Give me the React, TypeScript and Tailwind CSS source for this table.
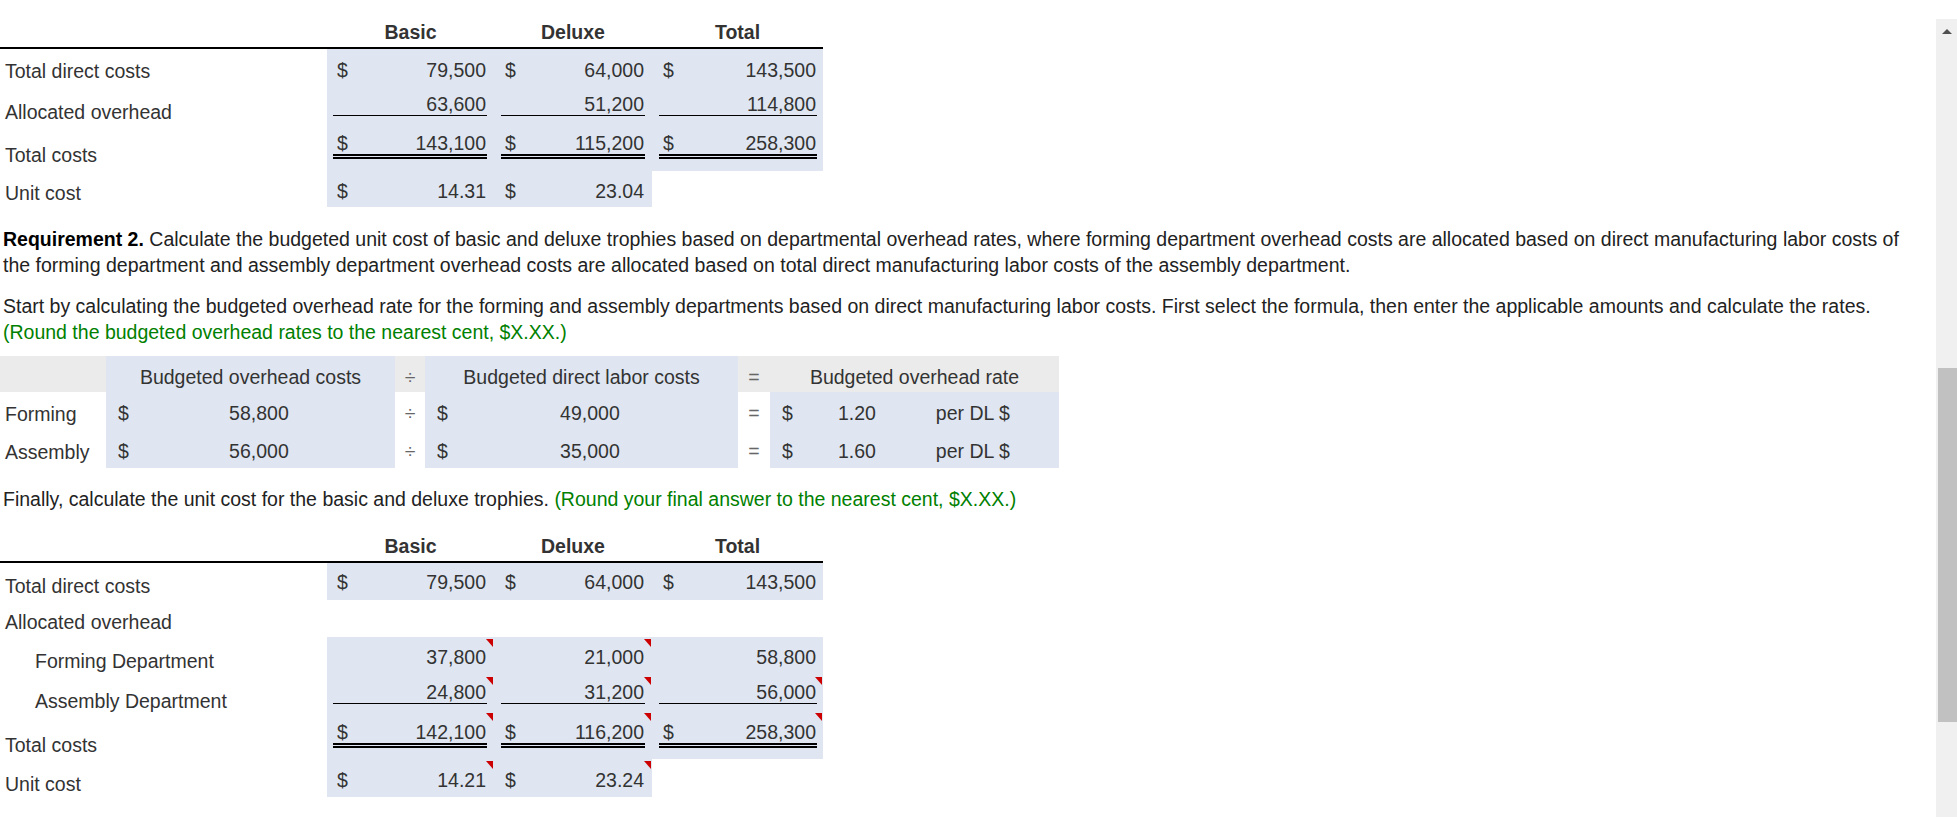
import React from 'react';

type Cell = { dollar?: boolean; value: string; flag?: boolean } | null;

interface CostRow {
  label: string;
  indent?: boolean;
  rowClass: string;
  labelPad: string;
  valPad: string;
  line?: 'single' | 'double';
  cells: Cell[];
}

// column geometry of the Basic / Deluxe / Total tables
const COLS = [
  { w: 'w-[167px]', pad: 'pl-[6px] pr-[7px]', title: 'Basic' },
  { w: 'w-[158px]', pad: 'pl-[7px] pr-[7px]', title: 'Deluxe' },
  { w: 'w-[171px]', pad: 'pl-[7px] pr-[6px]', title: 'Total' },
];

const topRows: CostRow[] = [
  {
    label: 'Total direct costs',
    rowClass: 'h-[38px]',
    labelPad: 'pt-[11px]',
    valPad: 'pt-[10px]',
    cells: [
      { dollar: true, value: '79,500' },
      { dollar: true, value: '64,000' },
      { dollar: true, value: '143,500' },
    ],
  },
  {
    label: 'Allocated overhead',
    rowClass: 'h-[35px]',
    labelPad: 'pt-[14px]',
    valPad: 'pt-[6px]',
    line: 'single',
    cells: [{ value: '63,600' }, { value: '51,200' }, { value: '114,800' }],
  },
  {
    label: 'Total costs',
    rowClass: 'h-[49px]',
    labelPad: 'pt-[22px]',
    valPad: 'pt-[11px]',
    line: 'double',
    cells: [
      { dollar: true, value: '143,100' },
      { dollar: true, value: '115,200' },
      { dollar: true, value: '258,300' },
    ],
  },
  {
    label: 'Unit cost',
    rowClass: 'h-[36px]',
    labelPad: 'pt-[11px]',
    valPad: 'pt-[9px]',
    cells: [{ dollar: true, value: '14.31' }, { dollar: true, value: '23.04' }, null],
  },
];

const bottomRows: CostRow[] = [
  {
    label: 'Total direct costs',
    rowClass: 'h-[37px]',
    labelPad: 'pt-[12px]',
    valPad: 'pt-[8px]',
    cells: [
      { dollar: true, value: '79,500' },
      { dollar: true, value: '64,000' },
      { dollar: true, value: '143,500' },
    ],
  },
  {
    label: 'Allocated overhead',
    rowClass: 'h-[37px]',
    labelPad: 'pt-[11px]',
    valPad: 'pt-[8px]',
    cells: [null, null, null],
  },
  {
    label: 'Forming Department',
    indent: true,
    rowClass: 'h-[38px]',
    labelPad: 'pt-[13px]',
    valPad: 'pt-[9px]',
    cells: [
      { value: '37,800', flag: true },
      { value: '21,000', flag: true },
      { value: '58,800' },
    ],
  },
  {
    label: 'Assembly Department',
    indent: true,
    rowClass: 'h-[36px]',
    labelPad: 'pt-[15px]',
    valPad: 'pt-[6px]',
    line: 'single',
    cells: [
      { value: '24,800', flag: true },
      { value: '31,200', flag: true },
      { value: '56,000', flag: true },
    ],
  },
  {
    label: 'Total costs',
    rowClass: 'h-[48px]',
    labelPad: 'pt-[23px]',
    valPad: 'pt-[11px]',
    line: 'double',
    cells: [
      { dollar: true, value: '142,100', flag: true },
      { dollar: true, value: '116,200', flag: true },
      { dollar: true, value: '258,300', flag: true },
    ],
  },
  {
    label: 'Unit cost',
    rowClass: 'h-[38px]',
    labelPad: 'pt-[14px]',
    valPad: 'pt-[10px]',
    cells: [
      { dollar: true, value: '14.21', flag: true },
      { dollar: true, value: '23.24', flag: true },
      null,
    ],
  },
];

function CostTable({ rows }: { rows: CostRow[] }) {
  return (
    <div className="w-[823px] text-[#333]">
      {/* Header */}
      <div className="flex h-[35px] items-center border-b-2 border-black pt-[2px]">
        <div className="w-[327px]" />
        {COLS.map((c) => (
          <div key={c.title} className={`${c.w} text-center font-bold`}>
            {c.title}
          </div>
        ))}
      </div>

      {rows.map((row) => (
        <div key={row.label} className={`flex ${row.rowClass}`}>
          <div className={`w-[327px] ${row.labelPad} ${row.indent ? 'pl-[35px]' : 'pl-[5px]'}`}>
            {row.label}
          </div>
          {row.cells.map((cell, i) => {
            const col = COLS[i];
            if (!cell) return <div key={i} className={col.w} />;
            return (
              <div key={i} className={`relative ${col.w} ${col.pad} ${row.valPad} bg-[#dfe6f1]`}>
                {cell.flag && (
                  <span className="absolute right-[1px] top-[2px] h-0 w-0 border-l-[7px] border-t-[8px] border-l-transparent border-t-[#cc0000]" />
                )}
                <div
                  className={`flex justify-between pl-[4px] pr-[1px] ${
                    row.line === 'single'
                      ? 'border-b border-black leading-[22px]'
                      : row.line === 'double'
                      ? 'border-b-[5px] border-double border-black leading-[21px]'
                      : 'leading-[22px]'
                  }`}
                >
                  <span>{cell.dollar ? '$' : ''}</span>
                  <span>{cell.value}</span>
                </div>
              </div>
            );
          })}
        </div>
      ))}
    </div>
  );
}

const rateRows = [
  { label: 'Forming', overhead: '58,800', labor: '49,000', rate: '1.20' },
  { label: 'Assembly', overhead: '56,000', labor: '35,000', rate: '1.60' },
];

function RateTable() {
  return (
    <div className="mt-[11px] w-[1059px] text-[#333]">
      <div className="flex h-[36px]">
        <div className="w-[106px] bg-[#ebebeb]" />
        <div className="flex w-[289px] items-center justify-center bg-[#dfe6f1] pt-[5px]">Budgeted overhead costs</div>
        <div className="flex w-[30px] items-center justify-center bg-[#ebebeb] pt-[5px] text-[#666]">÷</div>
        <div className="flex w-[313px] items-center justify-center bg-[#dfe6f1] pt-[5px]">Budgeted direct labor costs</div>
        <div className="flex w-[32px] items-center justify-center bg-[#ebebeb] pt-[5px] text-[#666]">=</div>
        <div className="flex w-[289px] items-center justify-center bg-[#ebebeb] pt-[5px]">Budgeted overhead rate</div>
      </div>
      {rateRows.map((r) => (
        <div key={r.label} className="flex h-[38px]">
          <div className="flex w-[106px] items-center pl-[5px] pt-[5px]">{r.label}</div>
          <div className="flex w-[289px] items-center bg-[#dfe6f1] pl-[12px] pr-[6px] pt-[3px]">
            <span>$</span>
            <span className="flex-1 text-center">{r.overhead}</span>
          </div>
          <div className="flex w-[30px] items-center justify-center pt-[3px] text-[#666]">÷</div>
          <div className="flex w-[313px] items-center bg-[#dfe6f1] pl-[12px] pr-[6px] pt-[3px]">
            <span>$</span>
            <span className="flex-1 text-center">{r.labor}</span>
          </div>
          <div className="flex w-[32px] items-center justify-center pt-[3px] text-[#666]">=</div>
          <div className="flex w-[289px] items-center bg-[#dfe6f1] pl-[12px] pt-[3px]">
            <span>$</span>
            <span className="w-[128px] text-center">{r.rate}</span>
            <span className="ml-[15px]">per DL $</span>
          </div>
        </div>
      ))}
    </div>
  );
}

export default function App() {
  return (
    <div className="flex h-[817px] w-full overflow-hidden bg-white font-['Liberation_Sans',Arial,sans-serif] text-[19.5px] leading-[22px]">
      <div className="flex-1 pt-[14px]">
        <CostTable rows={topRows} />

        <p className="mt-[19px] whitespace-nowrap pl-[3px] leading-[26px] text-[#222]">
          <strong className="text-black">Requirement 2.</strong> Calculate the budgeted unit cost of basic and deluxe
          trophies based on departmental overhead rates, where forming department overhead costs are allocated based on
          direct manufacturing labor costs of
          <br />
          the forming department and assembly department overhead costs are allocated based on total direct
          manufacturing labor costs of the assembly department.
        </p>

        <p className="mt-[15px] whitespace-nowrap pl-[3px] leading-[26px] text-[#222]">
          Start by calculating the budgeted overhead rate for the forming and assembly departments based on direct
          manufacturing labor costs. First select the formula, then enter the applicable amounts and calculate the rates.
          <br />
          <span className="text-[#008000]">(Round the budgeted overhead rates to the nearest cent, $X.XX.)</span>
        </p>

        <RateTable />

        <p className="mt-[18px] whitespace-nowrap pl-[3px] leading-[26px] text-[#222]">
          Finally, calculate the unit cost for the basic and deluxe trophies.{' '}
          <span className="text-[#008000]">(Round your final answer to the nearest cent, $X.XX.)</span>
        </p>

        <div className="mt-[16px]">
          <CostTable rows={bottomRows} />
        </div>
      </div>

      {/* Scrollbar */}
      <div className="mt-[19px] flex w-[21px] flex-col items-center bg-[#f0f0f0]">
        <span className="mt-[10px] h-0 w-0 border-x-[5px] border-b-[5px] border-x-transparent border-b-[#505050]" />
        <div className="ml-[2px] mt-[334px] h-[354px] w-[19px] bg-[#c1c1c1]" />
      </div>
    </div>
  );
}
